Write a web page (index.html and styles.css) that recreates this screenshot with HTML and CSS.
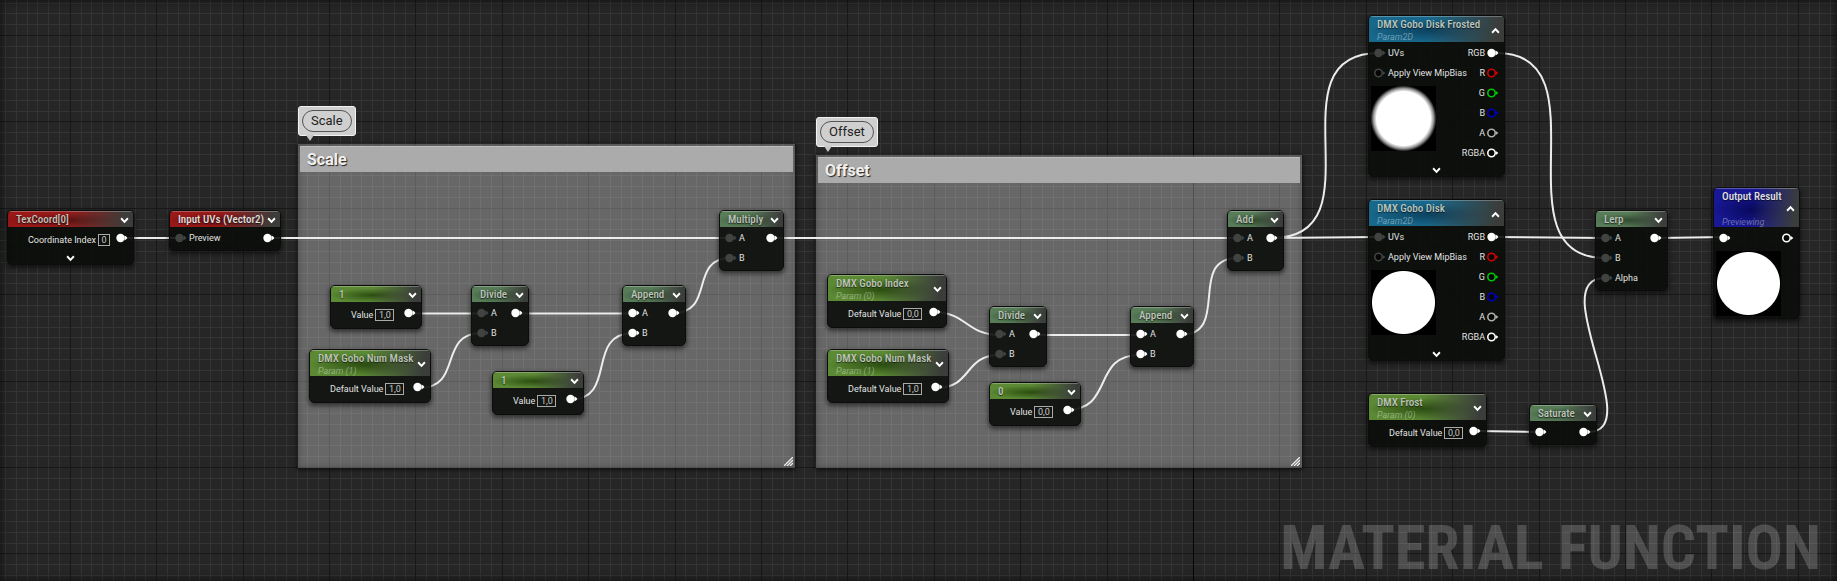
FILE: index.html
```html
<!DOCTYPE html>
<html lang="en">
<head>
<meta charset="utf-8">
<title>Material Function</title>
<link rel="stylesheet" href="styles.css">
</head>
<body>
<svg class="defs" aria-hidden="true">
  <symbol id="pin" viewBox="0 0 12 10"><circle cx="4.5" cy="5" r="4.2" fill="currentColor"/><path d="M8.5 2.6Q10.6 3.6 11.4 5Q10.6 6.4 8.5 7.4Z" fill="currentColor"/></symbol>
  <symbol id="ring" viewBox="0 0 12 10"><circle cx="4.5" cy="5" r="3.7" fill="#050605" stroke="currentColor" stroke-width="1.6"/><path d="M8.8 2.9L11.4 5L8.8 7.1Z" fill="currentColor"/></symbol>
  <symbol id="down" viewBox="0 0 8 6"><path d="M1 1L4 4.2L7 1" fill="none" stroke="currentColor" stroke-width="1.7"/></symbol>
  <symbol id="up" viewBox="0 0 8 6"><path d="M1 5L4 1.8L7 5" fill="none" stroke="currentColor" stroke-width="1.7"/></symbol>
</svg>
<main class="graph">
  <svg class="grid" id="grid" aria-hidden="true"></svg>
  <div class="watermark">MATERIAL FUNCTION</div>

  <section class="comment scale-box">
    <h2 class="comment-title">Scale</h2>
    <svg class="grip" viewBox="0 0 9 9"><path d="M0 9L9 0M3 9L9 3M6 9L9 6"/></svg>
  </section>
  <div class="bubble scale-bubble"><span>Scale</span></div>
  <section class="comment offset-box">
    <h2 class="comment-title">Offset</h2>
    <svg class="grip" viewBox="0 0 9 9"><path d="M0 9L9 0M3 9L9 3M6 9L9 6"/></svg>
  </section>
  <div class="bubble offset-bubble"><span>Offset</span></div>

  <svg class="wires" aria-hidden="true">
    <path d="M126 238H180M272 238H731M773 238H1238M1272 238L1379 237M1497 237L1605 238M1659 238L1724 237M1477 431L1540 432"/>
    <path d="M1272 238C1383 238 1268 53 1379 53"/>
    <path d="M1497 53C1608 53 1494 258 1605 258"/>
    <path d="M1588 432C1648 432 1543 278 1605 278"/>
    <path d="M410 313.5H482M516 313.5H634M1034 335H1140"/>
    <path d="M419 388C464 388 437 333 482 333"/>
    <path d="M569 400C619 400 584 333 634 333"/>
    <path d="M673 313C716 313 688 258 731 258"/>
    <path d="M933 312C967 312 966 335 1000 335"/>
    <path d="M936 388C973 388 963 355 1000 355"/>
    <path d="M1066 410C1115 410 1091 355 1140 355"/>
    <path d="M1180 335C1232 335 1186 258 1238 258"/>
  </svg>

  <article class="node red n-texcoord">
    <header><h3>TexCoord[0]</h3><button aria-label="Collapse"><svg><use href="#down"/></svg></button></header>
    <div class="body"><label class="value">Coordinate Index <input class="short" value="0"></label><div class="outs"><div class="row"><svg class="pin"><use href="#pin"/></svg></div></div></div>
    <button class="more" aria-label="Expand"><svg><use href="#down"/></svg></button>
  </article>
  <article class="node red bright n-input">
    <header><h3>Input UVs (Vector2)</h3><button aria-label="Collapse"><svg><use href="#down"/></svg></button></header>
    <div class="body"><div class="ins"><div class="row"><svg class="pin dim"><use href="#pin"/></svg>Preview</div></div><div class="outs"><div class="row"><svg class="pin"><use href="#pin"/></svg></div></div></div>
  </article>

  <article class="node green n-one">
    <header><h3>1</h3><button aria-label="Collapse"><svg><use href="#down"/></svg></button></header>
    <div class="body"><label class="value">Value <input value="1,0"></label><div class="outs"><div class="row"><svg class="pin"><use href="#pin"/></svg></div></div></div>
  </article>
  <article class="node green n-mask">
    <header><div><h3>DMX Gobo Num Mask</h3><p>Param (1)</p></div><button aria-label="Collapse"><svg><use href="#down"/></svg></button></header>
    <div class="body"><label class="value">Default Value <input value="1,0"></label><div class="outs"><div class="row"><svg class="pin"><use href="#pin"/></svg></div></div></div>
  </article>
  <article class="node sage n-divide">
    <header><h3>Divide</h3><button aria-label="Collapse"><svg><use href="#down"/></svg></button></header>
    <div class="body"><div class="ins"><div class="row"><svg class="pin dim"><use href="#pin"/></svg>A</div><div class="row"><svg class="pin dim"><use href="#pin"/></svg>B</div></div><div class="outs"><div class="row"><svg class="pin"><use href="#pin"/></svg></div></div></div>
  </article>
  <article class="node green n-one-b">
    <header><h3>1</h3><button aria-label="Collapse"><svg><use href="#down"/></svg></button></header>
    <div class="body"><label class="value">Value <input value="1,0"></label><div class="outs"><div class="row"><svg class="pin"><use href="#pin"/></svg></div></div></div>
  </article>
  <article class="node sage n-append">
    <header><h3>Append</h3><button aria-label="Collapse"><svg><use href="#down"/></svg></button></header>
    <div class="body"><div class="ins"><div class="row"><svg class="pin"><use href="#pin"/></svg>A</div><div class="row"><svg class="pin"><use href="#pin"/></svg>B</div></div><div class="outs"><div class="row"><svg class="pin"><use href="#pin"/></svg></div></div></div>
  </article>
  <article class="node sage n-multiply">
    <header><h3>Multiply</h3><button aria-label="Collapse"><svg><use href="#down"/></svg></button></header>
    <div class="body"><div class="ins"><div class="row"><svg class="pin dim"><use href="#pin"/></svg>A</div><div class="row"><svg class="pin dim"><use href="#pin"/></svg>B</div></div><div class="outs"><div class="row"><svg class="pin"><use href="#pin"/></svg></div></div></div>
  </article>

  <article class="node green n-index">
    <header><div><h3>DMX Gobo Index</h3><p>Param (0)</p></div><button aria-label="Collapse"><svg><use href="#down"/></svg></button></header>
    <div class="body"><label class="value">Default Value <input value="0,0"></label><div class="outs"><div class="row"><svg class="pin"><use href="#pin"/></svg></div></div></div>
  </article>
  <article class="node green n-mask-b">
    <header><div><h3>DMX Gobo Num Mask</h3><p>Param (1)</p></div><button aria-label="Collapse"><svg><use href="#down"/></svg></button></header>
    <div class="body"><label class="value">Default Value <input value="1,0"></label><div class="outs"><div class="row"><svg class="pin"><use href="#pin"/></svg></div></div></div>
  </article>
  <article class="node sage n-divide-b">
    <header><h3>Divide</h3><button aria-label="Collapse"><svg><use href="#down"/></svg></button></header>
    <div class="body"><div class="ins"><div class="row"><svg class="pin dim"><use href="#pin"/></svg>A</div><div class="row"><svg class="pin dim"><use href="#pin"/></svg>B</div></div><div class="outs"><div class="row"><svg class="pin"><use href="#pin"/></svg></div></div></div>
  </article>
  <article class="node green n-zero">
    <header><h3>0</h3><button aria-label="Collapse"><svg><use href="#down"/></svg></button></header>
    <div class="body"><label class="value">Value <input value="0,0"></label><div class="outs"><div class="row"><svg class="pin"><use href="#pin"/></svg></div></div></div>
  </article>
  <article class="node sage n-append-b">
    <header><h3>Append</h3><button aria-label="Collapse"><svg><use href="#down"/></svg></button></header>
    <div class="body"><div class="ins"><div class="row"><svg class="pin"><use href="#pin"/></svg>A</div><div class="row"><svg class="pin"><use href="#pin"/></svg>B</div></div><div class="outs"><div class="row"><svg class="pin"><use href="#pin"/></svg></div></div></div>
  </article>
  <article class="node sage n-add">
    <header><h3>Add</h3><button aria-label="Collapse"><svg><use href="#down"/></svg></button></header>
    <div class="body"><div class="ins"><div class="row"><svg class="pin dim"><use href="#pin"/></svg>A</div><div class="row"><svg class="pin dim"><use href="#pin"/></svg>B</div></div><div class="outs"><div class="row"><svg class="pin"><use href="#pin"/></svg></div></div></div>
  </article>

  <article class="node blue n-frosted">
    <header><div><h3>DMX Gobo Disk Frosted</h3><p>Param2D</p></div><button aria-label="Collapse"><svg><use href="#up"/></svg></button></header>
    <div class="body">
      <div class="ins"><div class="row"><svg class="pin dim"><use href="#pin"/></svg>UVs</div><div class="row"><svg class="pin dim"><use href="#ring"/></svg>Apply View MipBias</div><div class="preview soft"></div></div>
      <div class="outs"><div class="row">RGB<svg class="pin"><use href="#pin"/></svg></div><div class="row">R<svg class="pin r"><use href="#ring"/></svg></div><div class="row">G<svg class="pin g"><use href="#ring"/></svg></div><div class="row">B<svg class="pin b"><use href="#ring"/></svg></div><div class="row">A<svg class="pin a"><use href="#ring"/></svg></div><div class="row">RGBA<svg class="pin"><use href="#ring"/></svg></div></div>
    </div>
    <button class="more" aria-label="Expand"><svg><use href="#down"/></svg></button>
  </article>
  <article class="node blue n-disk">
    <header><div><h3>DMX Gobo Disk</h3><p>Param2D</p></div><button aria-label="Collapse"><svg><use href="#up"/></svg></button></header>
    <div class="body">
      <div class="ins"><div class="row"><svg class="pin dim"><use href="#pin"/></svg>UVs</div><div class="row"><svg class="pin dim"><use href="#ring"/></svg>Apply View MipBias</div><div class="preview"></div></div>
      <div class="outs"><div class="row">RGB<svg class="pin"><use href="#pin"/></svg></div><div class="row">R<svg class="pin r"><use href="#ring"/></svg></div><div class="row">G<svg class="pin g"><use href="#ring"/></svg></div><div class="row">B<svg class="pin b"><use href="#ring"/></svg></div><div class="row">A<svg class="pin a"><use href="#ring"/></svg></div><div class="row">RGBA<svg class="pin"><use href="#ring"/></svg></div></div>
    </div>
    <button class="more" aria-label="Expand"><svg><use href="#down"/></svg></button>
  </article>
  <article class="node green n-frost">
    <header><div><h3>DMX Frost</h3><p>Param (0)</p></div><button aria-label="Collapse"><svg><use href="#down"/></svg></button></header>
    <div class="body"><label class="value">Default Value <input value="0,0"></label><div class="outs"><div class="row"><svg class="pin"><use href="#pin"/></svg></div></div></div>
  </article>
  <article class="node sage n-saturate">
    <header><h3>Saturate</h3><button aria-label="Collapse"><svg><use href="#down"/></svg></button></header>
    <div class="body"><div class="ins"><div class="row"><svg class="pin"><use href="#pin"/></svg></div></div><div class="outs"><div class="row"><svg class="pin"><use href="#pin"/></svg></div></div></div>
  </article>
  <article class="node sage n-lerp">
    <header><h3>Lerp</h3><button aria-label="Collapse"><svg><use href="#down"/></svg></button></header>
    <div class="body"><div class="ins"><div class="row"><svg class="pin dim"><use href="#pin"/></svg>A</div><div class="row"><svg class="pin dim"><use href="#pin"/></svg>B</div><div class="row"><svg class="pin dim"><use href="#pin"/></svg>Alpha</div></div><div class="outs"><div class="row"><svg class="pin"><use href="#pin"/></svg></div></div></div>
  </article>
  <article class="node navy bright n-output">
    <header><div><h3>Output Result</h3><p>Previewing</p></div><button aria-label="Collapse"><svg><use href="#up"/></svg></button></header>
    <div class="body"><div class="ins"><div class="row"><svg class="pin"><use href="#pin"/></svg></div><div class="preview"></div></div><div class="outs"><div class="row"><svg class="pin"><use href="#ring"/></svg></div></div></div>
  </article>
</main>
<script src="grid.js"></script>
</body>
</html>
```

FILE: styles.css
```css
* { box-sizing: border-box; }
body { margin: 0; background: #262626; font-family: Roboto, "Liberation Sans", sans-serif; }
h2, h3, p { margin: 0; }
.defs { position: absolute; width: 0; height: 0; }

.graph { position: relative; min-height: 100vh; background: #262626; }
.graph::after { content: ""; position: absolute; inset: 0; pointer-events: none; box-shadow: inset 0 0 10px 1px rgba(0, 0, 0, .55); }
.grid, .wires { position: absolute; inset: 0; width: 100%; height: 100%; }
.grid .minor { stroke: #343434; }
.grid .major { stroke: #181818; }
.grid .origin { stroke: #050505; }
.wires { fill: none; stroke: #ececec; stroke-width: 2; }
.watermark { position: absolute; right: 16px; bottom: 0; font: 700 62px/66px "Roboto Condensed", Roboto, sans-serif; color: rgba(255, 255, 255, .19); white-space: nowrap; }

.comment { position: absolute; padding: 2px; background: rgba(255, 255, 255, .3); box-shadow: 0 1px 4px 1px rgba(0, 0, 0, .6), inset 0 0 6px rgba(0, 0, 0, .3); }
.comment-title { height: 26px; padding-left: 7px; background: #ababab; border-top: 1px solid #bdbdbd; color: #f0f0f0; font: 700 16px/25px Roboto, sans-serif; text-shadow: 1px 1px 1px #222; }
.grip { position: absolute; right: 2px; bottom: 2px; width: 9px; height: 9px; stroke: #eee; stroke-width: 1.3; }
.bubble { position: absolute; padding: 3px; border-radius: 3px; background: #cfcfcf; border: 1px solid #f2f2f2; }
.bubble span { display: block; padding: 0 8px; border: 1px solid #555; border-radius: 11px; color: #222; font-size: 13px; line-height: 20px; }
.bubble::after { content: ""; position: absolute; left: 7px; top: 100%; border: 4px solid transparent; border-top: 6px solid #c8c8c8; border-bottom: 0; }

.node { position: absolute; overflow: hidden; border: 1px solid #0b0c0b; border-radius: 5px; background: rgba(10, 13, 10, .9); box-shadow: 0 2px 4px 1px rgba(0, 0, 0, .5); color: #e2e2e2; font-size: 9px; }
.node header { display: flex; justify-content: space-between; align-items: center; min-height: 16px; padding: 1px 4px 0 8px; border-top: 1px solid rgba(255, 255, 255, .28); background: linear-gradient(100deg, transparent 45%, #3a3d3a 94%), radial-gradient(ellipse 48% 46% at 46% 55%, var(--deep), transparent), var(--tone); }
.node h3 { color: #bfc4bb; font: 500 11px/14px "Roboto Condensed", Roboto, sans-serif; text-shadow: 0 1px 1px rgba(0, 0, 0, .6); white-space: nowrap; }
.node p { color: rgba(255, 255, 255, .38); font-size: 9px; font-style: italic; line-height: 10px; }
.node.bright h3 { color: #e0e0e0; }
.node button { display: flex; padding: 0; border: 0; background: none; color: #fff; }
.node button svg { width: 9px; height: 7px; }
.red { --tone: #991818; --deep: #5c0d0d; }
.green { --tone: #5c8a34; --deep: #2b4d10; }
.sage { --tone: #587c58; --deep: #304c30; }
.blue { --tone: #18688c; --deep: #0c4260; }
.navy { --tone: #181894; --deep: #08085c; }

.body { display: flex; justify-content: space-between; padding: 1px 5px 2px; }
.row { display: flex; align-items: center; gap: 2px; height: 20px; white-space: nowrap; }
.outs { margin-left: auto; }
.outs .row { justify-content: flex-end; }
.ins { width: 0; }
.pin { width: 12px; height: 10px; flex: none; color: #fff; }
.dim { color: #414341; }
.r { color: #d40000; }
.g { color: #00c800; }
.b { color: #0000c4; }
.a { color: #b0b0b0; }
.value { display: flex; align-items: center; gap: 2px; height: 23px; padding-left: 15px; white-space: nowrap; }
.value input { width: 19px; height: 12px; padding: 0; border: 1px solid #aaa; border-radius: 0; background: transparent; color: #c8c8c8; font: 9px/10px Roboto, sans-serif; text-align: center; }
.value .short { width: 12px; }
.node .more { width: 100%; height: 11px; justify-content: center; align-items: center; }
.preview { width: 65px; height: 65px; margin: 3px 0 0 -3px; background: radial-gradient(circle, #fff 31px, #000 32px); }
.soft { background: radial-gradient(circle, #fff 27px, #999 30px, #000 33px); }

.scale-box { left: 298px; top: 144px; width: 497px; height: 324px; }
.offset-box { left: 816px; top: 155px; width: 486px; height: 313px; }
.scale-bubble { left: 298px; top: 106px; }
.offset-bubble { left: 816px; top: 117px; }
.n-texcoord { left: 7px; top: 210px; width: 127px; }
.n-input { left: 169px; top: 210px; width: 112px; }
.n-one { left: 330px; top: 285px; width: 92px; }
.n-mask { left: 309px; top: 349px; width: 122px; }
.n-divide { left: 471px; top: 285px; width: 58px; }
.n-one-b { left: 492px; top: 371px; width: 92px; }
.n-append { left: 622px; top: 285px; width: 64px; }
.n-multiply { left: 719px; top: 210px; width: 65px; }
.n-index { left: 827px; top: 274px; width: 120px; }
.n-mask-b { left: 827px; top: 349px; width: 122px; }
.n-divide-b { left: 989px; top: 306px; width: 58px; }
.n-zero { left: 989px; top: 382px; width: 92px; }
.n-append-b { left: 1130px; top: 306px; width: 64px; }
.n-add { left: 1227px; top: 210px; width: 57px; }
.n-frosted { left: 1368px; top: 15px; width: 137px; }
.n-disk { left: 1368px; top: 199px; width: 137px; }
.n-frost { left: 1368px; top: 393px; width: 119px; }
.n-saturate { left: 1529px; top: 404px; width: 68px; }
.n-lerp { left: 1595px; top: 210px; width: 73px; }
.n-output { left: 1713px; top: 187px; width: 87px; }
.n-output p { padding-top: 13px; line-height: 10px; }
```

FILE: grid.js
```js
// Eight minor cells per major cell; lines snap to whole pixels.
const CELL = 10.8;
const ORIGIN_X = 1193;
const ORIGIN_Y = 35;

function drawGrid() {
  const svg = document.getElementById("grid");
  const w = window.innerWidth;
  const h = window.innerHeight;
  const paths = { minor: "", major: "", origin: "" };
  for (let i = -Math.floor(ORIGIN_X / CELL); ORIGIN_X + i * CELL < w; i++) {
    const kind = i === 0 ? "origin" : i % 8 === 0 ? "major" : "minor";
    paths[kind] += `M${Math.round(ORIGIN_X + i * CELL) + 0.5} 0V${h}`;
  }
  for (let i = -Math.floor(ORIGIN_Y / CELL); ORIGIN_Y + i * CELL < h; i++) {
    paths[i % 8 === 0 ? "major" : "minor"] += `M0 ${Math.round(ORIGIN_Y + i * CELL) + 0.5}H${w}`;
  }
  svg.innerHTML = Object.keys(paths).map(k => `<path class="${k}" d="${paths[k]}"/>`).join("");
}

drawGrid();
window.addEventListener("resize", drawGrid);
```
